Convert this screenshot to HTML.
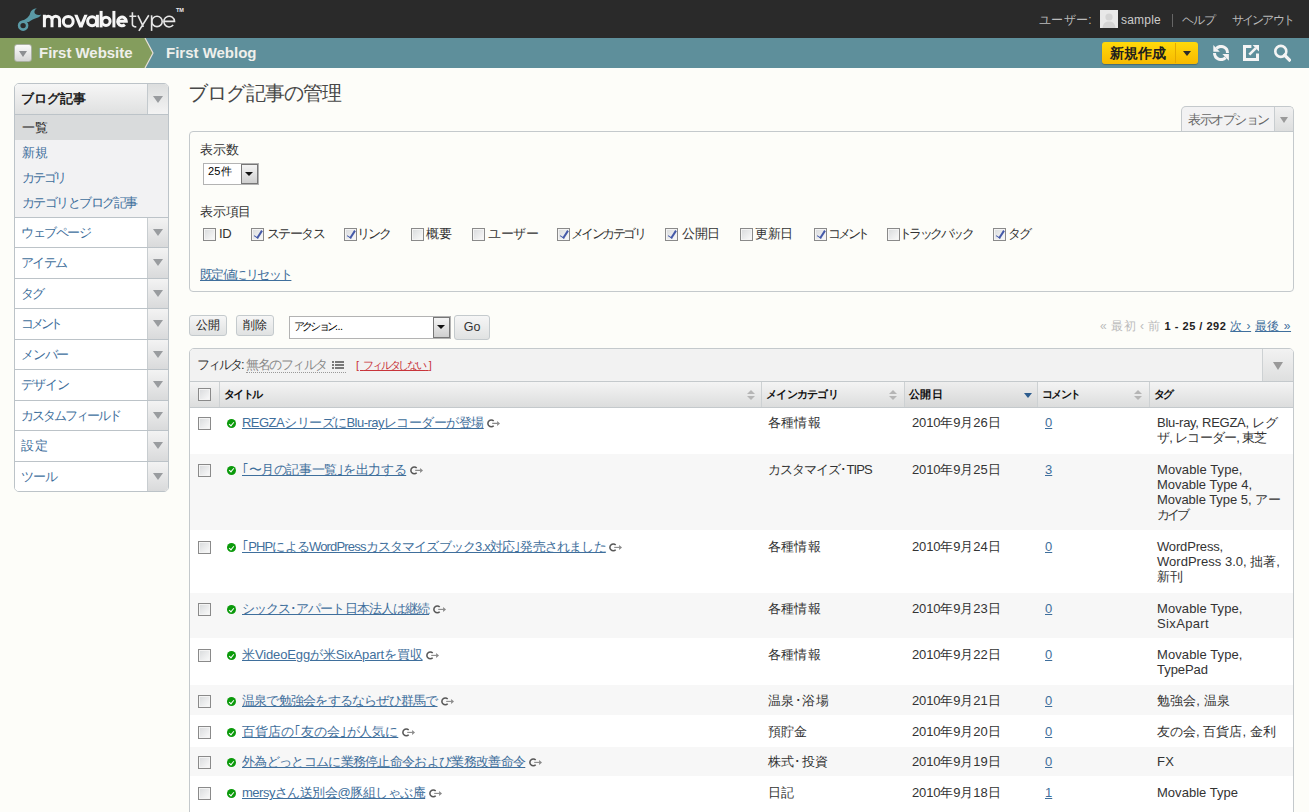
<!DOCTYPE html>
<html><head><meta charset="utf-8"><style>
.lb{margin-left:-6px}.rb{margin-right:-6px}.nd{margin:0 -3px}
*{box-sizing:border-box;margin:0;padding:0}
html,body{width:1309px;height:812px;overflow:hidden}
body{background:#fdfdf9;font-family:"Liberation Sans",sans-serif;font-size:13px;color:#333;position:relative}
a{color:#3f6f9c;text-decoration:underline}
.fit{white-space:nowrap}
.abs{position:absolute}
#hdr{position:absolute;left:0;top:0;width:1309px;height:38px;background:#2a2a2a}
#nav{position:absolute;left:0;top:38px;width:1309px;height:30px;background:#5e8f9b}
#navgreen{position:absolute;left:0;top:0;height:30px;width:153px;background:#849d5d;clip-path:polygon(0 0,145px 0,153px 15px,145px 30px,0 30px)}
.ddbtn{position:absolute;left:14px;top:6px;width:18px;height:18px;border-radius:3px;background:linear-gradient(#fafafa,#d6d6d6);border:1px solid #a9b0a0}
.tri{position:absolute;width:0;height:0;border-left:5px solid transparent;border-right:5px solid transparent;border-top:7px solid #999}
.navtxt{position:absolute;top:6px;font-weight:bold;font-size:15px;color:#efefeb;line-height:17px}
.hl{position:absolute;top:13px;font-size:12px;color:#bbb;line-height:15px}
#side{position:absolute;left:14px;top:83px;width:155px;height:409px;border:1px solid #bcc3c8;border-radius:5px;background:#fff;overflow:hidden}
.sh{position:absolute;left:0;top:0;width:153px;height:31px;background:linear-gradient(#f6f6f6,#dfe0e0);border-bottom:1px solid #bcc3c8}
.shdd{position:absolute;left:132px;top:0;width:21px;height:100%;border-left:1px solid #c3c9cd;background:linear-gradient(#dcdede,#f3f3f3)}
.sub{position:absolute;left:0;top:31px;width:153px;height:103px;background:#f2f2f3;border-bottom:1px solid #bcc3c8}
.si{position:absolute;left:0;width:153px;height:25px;line-height:25px;padding-left:7px;color:#3f6f9c}
.mi{position:absolute;left:0;width:153px;border-bottom:1px solid #bcc3c8;background:#fff}
.mi > span{position:absolute;left:6px;top:7px;color:#3f6f9c;line-height:15px}
.mi .dd{position:absolute;left:132px;top:0;width:21px;bottom:0;border-left:1px solid #c8cdd0;background:linear-gradient(#f3f3f3,#d9dadb)}
.cb{position:absolute;width:13px;height:13px;border:1px solid #8a8a8a;background:linear-gradient(135deg,#d8dadc,#fbfbfb);box-shadow:inset 0 0 0 1px #f4f4f4}
.cbc::after{content:"";position:absolute;left:3.5px;top:0px;width:2.5px;height:7.5px;border-right:2px solid #4459a8;border-bottom:1.8px solid #4459a8;transform:rotate(33deg)}
.lbl{position:absolute;line-height:15px;color:#333}
.btn{position:absolute;height:21px;border:1px solid #c4cacd;border-radius:3px;background:linear-gradient(#f6f6f6,#e0e2e2);font-size:12px;color:#222;line-height:19px}
.sel{position:absolute;border:1px solid #b3b3b3;background:#fff;font-size:11px;color:#000}
.selbtn{position:absolute;right:0px;top:0px;width:17px;bottom:0px;border:1px solid #777;background:linear-gradient(#f4f4f4,#cfcfcf)}
.selbtn::after{content:"";position:absolute;left:3px;top:7px;border-left:4px solid transparent;border-right:4px solid transparent;border-top:4px solid #111}
#opt{position:absolute;left:189px;top:131px;width:1105px;height:161px;border:1px solid #c4c9cc;border-radius:4px 0 4px 4px}
#opttab{position:absolute;left:1181px;top:106px;width:113px;height:26px;border:1px solid #c4c9cc;border-bottom:none;border-radius:5px 5px 0 0;background:#f2f2f3;overflow:hidden}
#list{position:absolute;left:189px;top:348px;width:1105px;height:470px;border:1px solid #c4c9cc;border-radius:5px 5px 0 0;overflow:hidden;background:#fff}
#fbar{position:absolute;left:0;top:0;width:1103px;height:33px;background:#f2f2f2;border-bottom:1px solid #c4c9cc}
#thead{position:absolute;left:0;top:33px;width:1103px;height:26px;background:linear-gradient(#f4f4f4,#dcdddd);border-bottom:1px solid #c4c9cc}
.th{position:absolute;top:0;height:25px;border-left:1px solid #cdd1d3;font-size:11px;font-weight:bold;color:#111;padding:6px 0 0 4px;line-height:13px}
.sort{position:absolute;top:8px;width:8px;height:10px}
.sort::before{content:"";position:absolute;left:0;top:0;border-left:4px solid transparent;border-right:4px solid transparent;border-bottom:4px solid #b5b5b5}
.sort::after{content:"";position:absolute;left:0;top:6px;border-left:4px solid transparent;border-right:4px solid transparent;border-top:4px solid #b5b5b5}
.row{position:absolute;left:0;width:1103px}
.row.alt{background:#f7f7f7}
.td{position:absolute;top:7px;line-height:15.2px;color:#333}
.ok{position:absolute;width:9px;height:9px;border-radius:50%;background:#0b9a0b}
.ok::after{content:"";position:absolute;left:3px;top:1.5px;width:2px;height:4px;border-right:1.5px solid #fff;border-bottom:1.5px solid #fff;transform:rotate(40deg)}
</style></head><body>
<div id="hdr">
<svg class="abs" style="left:12px;top:2px" width="40" height="34" viewBox="12 2 40 34">
<path d="M36.9 8.2 C33.5 8.4 30.8 10.2 30.2 13 C29.6 16.5 26.5 19 20.4 21.7 L28.75 22.1 C31 20 34 18.6 38 17.5 C39.5 16.9 40.5 15.8 41 14.5 C39.5 15.3 37 15.2 35.5 14.1 C34 12.8 33.9 10 36.9 8.2 Z" fill="#5a9aa6"/>
<circle cx="23.1" cy="25.6" r="4" fill="none" stroke="#5a9aa6" stroke-width="2.6"/></svg>
<svg class="abs" style="left:0;top:0" width="200" height="38" viewBox="0 0 200 38">
<g fill="none" stroke="#f6f6f6" stroke-width="3">
<path d="M44.4 14.8 V27.3 M44.4 20.1 A3.8 3.8 0 0 1 52 20.1 V27.3 M52 20.1 A3.8 3.8 0 0 1 59.6 20.1 V27.3"/>
<circle cx="68.25" cy="21.4" r="4.9"/>
<circle cx="92.1" cy="21.3" r="4.5"/>
<path d="M97.4 14.8 V27.3"/>
<path d="M101.1 10.9 V27.4"/>
<circle cx="106" cy="21.3" r="4.1"/>
<path d="M113.9 10.9 V27.4"/>
<path d="M117.6 21.3 H126.3 A4.3 4.3 0 1 0 124.9 24.6" />
</g>
<path d="M74.2 14.8 L77.5 14.8 L80.9 22.8 L84.3 14.8 L87.6 14.8 L82.5 27.4 L79.3 27.4 Z" fill="#f6f6f6"/>
<g fill="none" stroke="#e6e6e6" stroke-width="1.6">
<path d="M132.4 12.3 V24.3 Q132.4 26.9 136.3 26.9 M129.4 16.3 H136.3"/>
<path d="M137.9 15.3 L143.4 26.9 M148.8 15.3 L138.9 30.9"/>
<path d="M151.6 15.3 V30.9"/>
<circle cx="157" cy="21.4" r="5.2"/>
<path d="M163.8 21.4 H174.5 A5.35 5.35 0 1 0 173.2 25.1"/>
</g>
<text x="176" y="12" font-family="Liberation Sans" font-weight="bold" font-size="5.5" fill="#eee">TM</text>
</svg>
<div class="hl" style="left:1039px"><span class="fit" id="f0" style="letter-spacing:0.331px">ユーザー:</span></div>
<svg class="abs" style="left:1100px;top:10px" width="18" height="18" viewBox="0 0 18 18"><rect width="18" height="18" fill="#e8e8e8"/><circle cx="9" cy="7" r="3.6" fill="#d4d4d4"/><path d="M2.5 18 C3 13 5.5 11.5 9 11.5 C12.5 11.5 15 13 15.5 18 Z" fill="#d4d4d4"/></svg>
<div class="hl" style="left:1121px;color:#ccc"><span class="fit" id="f1" style="letter-spacing:0.219px">sample</span></div>
<div class="abs" style="left:1172px;top:14px;width:1px;height:13px;background:#666"></div>
<div class="hl" style="left:1182px"><span class="fit" id="f2" style="letter-spacing:-1.000px">ヘルプ</span></div>
<div class="hl" style="left:1232px"><span class="fit" id="f3" style="letter-spacing:-1.836px">サインアウト</span></div>
</div>
<div id="nav"><div id="navgreen"></div>
<svg class="abs" style="left:0;top:0" width="160" height="30"><polyline points="145,0 153,15 145,30" fill="none" stroke="#e8e0d8" stroke-width="1.2"/></svg>
<div class="ddbtn"><div class="tri" style="left:4px;top:6px;border-left-width:4px;border-right-width:4px;border-top-width:6px;border-top-color:#8d8f92"></div></div>
<div class="navtxt" style="left:39px"><span class="fit" id="f4" style="letter-spacing:-0.032px">First Website</span></div>
<div class="navtxt" style="left:166px"><span class="fit" id="f5" style="letter-spacing:-0.005px">First Weblog</span></div>
<div class="abs" style="left:1102px;top:4px;width:96px;height:22px;border-radius:3px;background:linear-gradient(#ffd90a,#f7b900);box-shadow:0 1px 1px rgba(0,0,0,0.25)"><div class="abs" style="left:73px;top:1px;width:1px;height:20px;background:#e3a900"></div><div class="abs" style="left:81px;top:9px;border-left:4px solid transparent;border-right:4px solid transparent;border-top:5.5px solid #2a2a2a"></div><div class="abs" style="left:8px;top:3px;font-size:14px;font-weight:bold;color:#1e1e1e;line-height:16px">新規作成</div></div>
<svg class="abs" style="left:1213px;top:7px" width="16" height="16" viewBox="0 0 16 16"><g fill="none" stroke="#f4f4f4" stroke-width="3"><path d="M14.5 8 A6.5 6.5 0 0 0 3.4 3.4"/><path d="M1.5 8 A6.5 6.5 0 0 0 12.6 12.6"/></g><g fill="#f4f4f4"><path d="M0.3 0.1 L0.3 6.8 L6.8 6.8 Z"/><path d="M15.9 9.1 L15.9 15.8 L9.4 9.1 Z"/></g></svg>
<svg class="abs" style="left:1243px;top:7px" width="16" height="16" viewBox="0 0 16 16"><path d="M8.4 1.5 H1.5 V14.5 H14.5 V8.6" fill="none" stroke="#f4f4f4" stroke-width="3"/><path d="M6.3 9.7 L12.8 3.2" stroke="#f4f4f4" stroke-width="2.6"/><path d="M9.6 0 L16 0 L16 6.4 Z" fill="#f4f4f4"/></svg>
<svg class="abs" style="left:1273px;top:6px" width="18" height="18" viewBox="0 0 18 18"><circle cx="7.8" cy="7.4" r="5.5" fill="none" stroke="#f4f4f4" stroke-width="2.6"/><path d="M11.6 11.2 L16.4 16" stroke="#f4f4f4" stroke-width="3.2" stroke-linecap="square"/></svg>

</div>
<div id="side">
<div class="sh"><div class="abs" style="left:6px;top:7px;font-weight:bold;color:#222;line-height:15px"><span class="fit" id="f6" style="letter-spacing:0.100px">ブログ記事</span></div><div class="shdd"><div class="tri" style="left:5px;top:12px;border-top-width:7.5px;border-top-color:#999c9f"></div></div></div>
<div class="sub">
<div class="si" style="top:0;background:#d9dbdc;color:#222"><span class="fit" id="f7" style="letter-spacing:0.000px">一覧</span></div>
<div class="si" style="top:25px"><span class="fit" id="f8" style="letter-spacing:0.000px">新規</span></div>
<div class="si" style="top:50px"><span class="fit" id="f9" style="letter-spacing:-2.250px">カテゴリ</span></div>
<div class="si" style="top:75px"><span class="fit" id="f10" style="letter-spacing:-1.552px">カテゴリとブログ記事</span></div>
</div>
<div class="mi" style="top:134px;height:30px"><span class="fit" id="f11" style="letter-spacing:-1.500px">ウェブページ</span><div class="dd"><div class="tri" style="left:5px;top:11px;border-top-width:7.5px;border-top-color:#999c9f"></div></div></div>
<div class="mi" style="top:164px;height:31px"><span class="fit" id="f12" style="letter-spacing:-1.578px">アイテム</span><div class="dd"><div class="tri" style="left:5px;top:11px;border-top-width:7.5px;border-top-color:#999c9f"></div></div></div>
<div class="mi" style="top:195px;height:30px"><span class="fit" id="f13" style="letter-spacing:-2.500px">タグ</span><div class="dd"><div class="tri" style="left:5px;top:11px;border-top-width:7.5px;border-top-color:#999c9f"></div></div></div>
<div class="mi" style="top:225px;height:31px"><span class="fit" id="f14" style="letter-spacing:-3.250px">コメント</span><div class="dd"><div class="tri" style="left:5px;top:11px;border-top-width:7.5px;border-top-color:#999c9f"></div></div></div>
<div class="mi" style="top:256px;height:30px"><span class="fit" id="f15" style="letter-spacing:-1.250px">メンバー</span><div class="dd"><div class="tri" style="left:5px;top:11px;border-top-width:7.5px;border-top-color:#999c9f"></div></div></div>
<div class="mi" style="top:286px;height:31px"><span class="fit" id="f16" style="letter-spacing:-1.000px">デザイン</span><div class="dd"><div class="tri" style="left:5px;top:11px;border-top-width:7.5px;border-top-color:#999c9f"></div></div></div>
<div class="mi" style="top:317px;height:30px"><span class="fit" id="f17" style="letter-spacing:-2.035px">カスタムフィールド</span><div class="dd"><div class="tri" style="left:5px;top:11px;border-top-width:7.5px;border-top-color:#999c9f"></div></div></div>
<div class="mi" style="top:347px;height:31px"><span class="fit" id="f18" style="letter-spacing:0.500px">設定</span><div class="dd"><div class="tri" style="left:5px;top:11px;border-top-width:7.5px;border-top-color:#999c9f"></div></div></div>
<div class="mi" style="top:378px;height:30px"><span class="fit" id="f19" style="letter-spacing:-1.000px">ツール</span><div class="dd"><div class="tri" style="left:5px;top:11px;border-top-width:7.5px;border-top-color:#999c9f"></div></div></div>
</div>
<div class="abs" style="left:188px;top:81px;font-size:20px;color:#484848;line-height:24px"><span class="fit" id="f20" style="letter-spacing:-0.814px">ブログ記事の管理</span></div>
<div id="opttab"><div class="abs" style="left:6px;top:5px;font-size:13px;color:#666;line-height:15px"><span class="fit" id="f21" style="letter-spacing:-1.487px">表示オプション</span></div><div class="abs" style="left:92px;top:0;width:19px;height:25px;border-left:1px solid #c8cdd0;background:linear-gradient(#f0f0f0,#dcdddd)"><div class="tri" style="left:5px;top:10px;border-left-width:4px;border-right-width:4px;border-top-width:6px;border-top-color:#9a9a9a"></div></div></div>
<div id="opt">
<div class="lbl" style="left:10px;top:10px"><span class="fit" id="f22" style="letter-spacing:-0.068px">表示数</span></div>
<div class="sel" style="left:13px;top:31px;width:56px;height:22px"><div class="abs" style="left:4px;top:1px;line-height:13px"><span class="fit" id="f23" style="letter-spacing:0.250px">25件</span></div><div class="selbtn"></div></div>
<div class="lbl" style="left:10px;top:72px"><span class="fit" id="f24" style="letter-spacing:-0.250px">表示項目</span></div>
</div>
<div class="cb" style="left:203px;top:228px"></div><div class="lbl" style="left:219px;top:226px"><span class="fit" id="f25" style="letter-spacing:-0.250px">ID</span></div>
<div class="cb cbc" style="left:251px;top:228px"></div><div class="lbl" style="left:267px;top:226px"><span class="fit" id="f26" style="letter-spacing:-1.603px">ステータス</span></div>
<div class="cb cbc" style="left:344px;top:228px"></div><div class="lbl" style="left:357px;top:226px"><span class="fit" id="f27" style="letter-spacing:-1.802px">リンク</span></div>
<div class="cb" style="left:411px;top:228px"></div><div class="lbl" style="left:426px;top:226px"><span class="fit" id="f28" style="letter-spacing:0.344px">概要</span></div>
<div class="cb" style="left:472px;top:228px"></div><div class="lbl" style="left:488px;top:226px"><span class="fit" id="f29" style="letter-spacing:-0.500px">ユーザー</span></div>
<div class="cb cbc" style="left:557px;top:228px"></div><div class="lbl" style="left:571px;top:226px"><span class="fit" id="f30" style="letter-spacing:-2.574px">メインカテゴリ</span></div>
<div class="cb cbc" style="left:665px;top:228px"></div><div class="lbl" style="left:682px;top:226px"><span class="fit" id="f31" style="letter-spacing:-0.401px">公開日</span></div>
<div class="cb" style="left:740px;top:228px"></div><div class="lbl" style="left:755px;top:226px"><span class="fit" id="f32" style="letter-spacing:-0.469px">更新日</span></div>
<div class="cb cbc" style="left:814px;top:228px"></div><div class="lbl" style="left:828px;top:226px"><span class="fit" id="f33" style="letter-spacing:-3.250px">コメント</span></div>
<div class="cb" style="left:887px;top:228px"></div><div class="lbl" style="left:899px;top:226px"><span class="fit" id="f34" style="letter-spacing:-2.574px">トラックバック</span></div>
<div class="cb cbc" style="left:993px;top:228px"></div><div class="lbl" style="left:1008px;top:226px"><span class="fit" id="f35" style="letter-spacing:-2.000px">タグ</span></div>
<a class="lbl" href="#" style="left:200px;top:267px;color:#3f6f9c"><span class="fit" id="f36" style="letter-spacing:-1.576px">既定値にリセット</span></a>
<div class="btn" style="left:189px;top:315px;width:38px"><span class="abs" style="left:6px;top:2px;line-height:15px"><span class="fit" id="f37" style="letter-spacing:0.000px">公開</span></span></div>
<div class="btn" style="left:236px;top:315px;width:38px"><span class="abs" style="left:6px;top:2px;line-height:15px"><span class="fit" id="f38" style="letter-spacing:0.250px">削除</span></span></div>
<div class="sel" style="left:289px;top:316px;width:162px;height:23px"><div class="abs" style="left:4px;top:3px;line-height:13px"><span class="fit" id="f39" style="letter-spacing:-2.803px">アクション</span><span style="letter-spacing:-0.5px">...</span></div><div class="selbtn"></div></div>
<div class="btn" style="left:454px;top:315px;width:36px;height:25px;line-height:23px;font-size:12.5px;text-align:center;color:#333">Go</div>
<div class="abs" style="left:1100px;top:319px;font-size:12px;line-height:15px;color:#bbb;white-space:nowrap"><span class="fit" id="f40" style="letter-spacing:0.510px">« 最初 ‹ 前 <b style="color:#222;font-size:11px">1 - 25 / 292</b> <a href="#">次 ›</a> <a href="#">最後 »</a></span></div>
<div id="list"><div id="fbar">
<div class="abs" style="left:7px;top:8px;line-height:15px;color:#333;white-space:nowrap"><span class="fit" id="f41" style="letter-spacing:-2.025px">フィルタ:</span> <span style="color:#888;border-bottom:1px dotted #999;padding-right:19px"><span class="fit" id="f42" style="letter-spacing:-1.516px">無名のフィルタ</span></span></div>
<svg class="abs" style="left:142px;top:11px" width="12" height="10"><g fill="#7a7a7a"><rect x="0" y="1" width="2" height="2"/><rect x="3" y="1" width="9" height="2"/><rect x="0" y="4" width="2" height="2"/><rect x="3" y="4" width="9" height="2"/><rect x="0" y="7" width="2" height="2"/><rect x="3" y="7" width="9" height="2"/></g></svg>
<a class="abs" href="#" style="left:166px;top:10px;font-size:11px;line-height:13px;color:#c8343a;white-space:nowrap"><span style="letter-spacing:4px">[</span><span class="fit" id="f43" style="letter-spacing:-2.143px">フィルタしない</span><span style="letter-spacing:0.5px">&nbsp;</span>]</a>
<div class="abs" style="left:1072px;top:0;width:31px;height:32px;border-left:1px solid #cdd1d3;background:linear-gradient(#f2f2f2,#dedfdf)"><div class="tri" style="left:10px;top:13px;border-left-width:5px;border-right-width:5px;border-top-width:8px;border-top-color:#999"></div></div>
</div><div id="thead"><div class="cb" style="left:8px;top:6px"></div>
<div class="th" style="left:29px;width:542px"><span class="fit" id="f44" style="letter-spacing:-1.551px">タイトル</span><div class="sort" style="left:527px"></div></div>
<div class="th" style="left:571px;width:143px"><span class="fit" id="f45" style="letter-spacing:-0.717px">メインカテゴリ</span><div class="sort" style="left:127px"></div></div>
<div class="th" style="left:714px;width:133px;background:linear-gradient(#eeeeee,#d6d7d7)"><span class="fit" id="f46" style="letter-spacing:0.333px">公開日</span><div class="abs" style="left:119px;top:11px;border-left:4px solid transparent;border-right:4px solid transparent;border-top:5px solid #2c5c8e"></div></div>
<div class="th" style="left:847px;width:112px"><span class="fit" id="f47" style="letter-spacing:-1.750px">コメント</span><div class="sort" style="left:96px"></div></div>
<div class="th" style="left:959px;width:144px"><span class="fit" id="f48" style="letter-spacing:-2.000px">タグ</span></div>
</div>
<div class="row" style="top:59px;height:46px">
<div class="abs" style="left:0;top:0px;width:100%;height:100%">
<div class="cb" style="left:8px;top:9px"></div><div class="ok" style="left:37px;top:11px"></div>
<div class="td" style="left:52px;white-space:nowrap"><a href="#"><span class="fit" id="f51" style="letter-spacing:-0.530px">REGZAシリーズにBlu-rayレコーダーが登場</span></a><svg style="margin-left:3.5px;vertical-align:-1px" width="14" height="10" viewBox="0 0 14 10"><path d="M6.7 3.0 A3.4 3.4 0 1 0 6.7 7.8" fill="none" stroke="#585858" stroke-width="1.55"/><path d="M5.2 5.4 H10.6" stroke="#8a8a8a" stroke-width="1.1"/><path d="M10.1 2.9 L13 5.4 L10.1 7.9 Z" fill="#8a8a8a"/></svg></div>
<div class="td" style="left:578px"><span class="fit" id="f52" style="letter-spacing:0.172px">各種情報</span></div>
<div class="td" style="left:722px"><span class="fit" id="f53" style="letter-spacing:-0.122px">2010年9月26日</span></div>
<div class="td" style="left:855px"><a href="#">0</a></div>
<div class="td" style="left:967px"><span class="fit" id="f49" style="letter-spacing:-0.264px">Blu-ray, REGZA, レグ</span><br><span class="fit" id="f50" style="letter-spacing:-0.737px">ザ, レコーダー, 東芝</span></div>
</div></div>
<div class="row alt" style="top:105px;height:76px">
<div class="abs" style="left:0;top:0.5px;width:100%;height:100%">
<div class="cb" style="left:8px;top:9px"></div><div class="ok" style="left:37px;top:11px"></div>
<div class="td" style="left:52px;white-space:nowrap"><a href="#"><span class="fit" id="f58" style="letter-spacing:-0.415px">｢〜月の記事一覧｣を出力する</span></a><svg style="margin-left:3.5px;vertical-align:-1px" width="14" height="10" viewBox="0 0 14 10"><path d="M6.7 3.0 A3.4 3.4 0 1 0 6.7 7.8" fill="none" stroke="#585858" stroke-width="1.55"/><path d="M5.2 5.4 H10.6" stroke="#8a8a8a" stroke-width="1.1"/><path d="M10.1 2.9 L13 5.4 L10.1 7.9 Z" fill="#8a8a8a"/></svg></div>
<div class="td" style="left:578px"><span class="fit" id="f59" style="letter-spacing:-0.928px">カスタマイズ･TIPS</span></div>
<div class="td" style="left:722px"><span class="fit" id="f60" style="letter-spacing:-0.122px">2010年9月25日</span></div>
<div class="td" style="left:855px"><a href="#">3</a></div>
<div class="td" style="left:967px"><span class="fit" id="f54" style="letter-spacing:0.091px">Movable Type,</span><br><span class="fit" id="f55" style="letter-spacing:-0.011px">Movable Type 4,</span><br><span class="fit" id="f56" style="letter-spacing:-0.043px">Movable Type 5, アー</span><br><span class="fit" id="f57" style="letter-spacing:-3.000px">カイブ</span></div>
</div></div>
<div class="row" style="top:181px;height:63px">
<div class="abs" style="left:0;top:2px;width:100%;height:100%">
<div class="cb" style="left:8px;top:9px"></div><div class="ok" style="left:37px;top:11px"></div>
<div class="td" style="left:52px;white-space:nowrap"><a href="#"><span class="fit" id="f64" style="letter-spacing:-0.827px">｢PHPによるWordPressカスタマイズブック3.x対応｣発売されました</span></a><svg style="margin-left:3.5px;vertical-align:-1px" width="14" height="10" viewBox="0 0 14 10"><path d="M6.7 3.0 A3.4 3.4 0 1 0 6.7 7.8" fill="none" stroke="#585858" stroke-width="1.55"/><path d="M5.2 5.4 H10.6" stroke="#8a8a8a" stroke-width="1.1"/><path d="M10.1 2.9 L13 5.4 L10.1 7.9 Z" fill="#8a8a8a"/></svg></div>
<div class="td" style="left:578px"><span class="fit" id="f65" style="letter-spacing:0.172px">各種情報</span></div>
<div class="td" style="left:722px"><span class="fit" id="f66" style="letter-spacing:-0.122px">2010年9月24日</span></div>
<div class="td" style="left:855px"><a href="#">0</a></div>
<div class="td" style="left:967px"><span class="fit" id="f61" style="letter-spacing:-0.167px">WordPress,</span><br><span class="fit" id="f62" style="letter-spacing:0.023px">WordPress 3.0, 拙著,</span><br><span class="fit" id="f63" style="letter-spacing:0.000px">新刊</span></div>
</div></div>
<div class="row alt" style="top:244px;height:45px">
<div class="abs" style="left:0;top:1px;width:100%;height:100%">
<div class="cb" style="left:8px;top:9px"></div><div class="ok" style="left:37px;top:11px"></div>
<div class="td" style="left:52px;white-space:nowrap"><a href="#"><span class="fit" id="f69" style="letter-spacing:-0.938px">シックス･アパート日本法人は継続</span></a><svg style="margin-left:3.5px;vertical-align:-1px" width="14" height="10" viewBox="0 0 14 10"><path d="M6.7 3.0 A3.4 3.4 0 1 0 6.7 7.8" fill="none" stroke="#585858" stroke-width="1.55"/><path d="M5.2 5.4 H10.6" stroke="#8a8a8a" stroke-width="1.1"/><path d="M10.1 2.9 L13 5.4 L10.1 7.9 Z" fill="#8a8a8a"/></svg></div>
<div class="td" style="left:578px"><span class="fit" id="f70" style="letter-spacing:0.172px">各種情報</span></div>
<div class="td" style="left:722px"><span class="fit" id="f71" style="letter-spacing:-0.122px">2010年9月23日</span></div>
<div class="td" style="left:855px"><a href="#">0</a></div>
<div class="td" style="left:967px"><span class="fit" id="f67" style="letter-spacing:0.091px">Movable Type,</span><br><span class="fit" id="f68" style="letter-spacing:0.357px">SixApart</span></div>
</div></div>
<div class="row" style="top:289px;height:47px">
<div class="abs" style="left:0;top:2px;width:100%;height:100%">
<div class="cb" style="left:8px;top:9px"></div><div class="ok" style="left:37px;top:11px"></div>
<div class="td" style="left:52px;white-space:nowrap"><a href="#"><span class="fit" id="f74" style="letter-spacing:-0.122px">米VideoEggが米SixApartを買収</span></a><svg style="margin-left:3.5px;vertical-align:-1px" width="14" height="10" viewBox="0 0 14 10"><path d="M6.7 3.0 A3.4 3.4 0 1 0 6.7 7.8" fill="none" stroke="#585858" stroke-width="1.55"/><path d="M5.2 5.4 H10.6" stroke="#8a8a8a" stroke-width="1.1"/><path d="M10.1 2.9 L13 5.4 L10.1 7.9 Z" fill="#8a8a8a"/></svg></div>
<div class="td" style="left:578px"><span class="fit" id="f75" style="letter-spacing:0.172px">各種情報</span></div>
<div class="td" style="left:722px"><span class="fit" id="f76" style="letter-spacing:-0.122px">2010年9月22日</span></div>
<div class="td" style="left:855px"><a href="#">0</a></div>
<div class="td" style="left:967px"><span class="fit" id="f72" style="letter-spacing:0.091px">Movable Type,</span><br><span class="fit" id="f73" style="letter-spacing:-0.047px">TypePad</span></div>
</div></div>
<div class="row alt" style="top:336px;height:30px">
<div class="abs" style="left:0;top:1px;width:100%;height:100%">
<div class="cb" style="left:8px;top:9px"></div><div class="ok" style="left:37px;top:11px"></div>
<div class="td" style="left:52px;white-space:nowrap"><a href="#"><span class="fit" id="f78" style="letter-spacing:-0.782px">温泉で勉強会をするならぜひ群馬で</span></a><svg style="margin-left:3.5px;vertical-align:-1px" width="14" height="10" viewBox="0 0 14 10"><path d="M6.7 3.0 A3.4 3.4 0 1 0 6.7 7.8" fill="none" stroke="#585858" stroke-width="1.55"/><path d="M5.2 5.4 H10.6" stroke="#8a8a8a" stroke-width="1.1"/><path d="M10.1 2.9 L13 5.4 L10.1 7.9 Z" fill="#8a8a8a"/></svg></div>
<div class="td" style="left:578px"><span class="fit" id="f79" style="letter-spacing:0.397px">温泉･浴場</span></div>
<div class="td" style="left:722px"><span class="fit" id="f80" style="letter-spacing:-0.122px">2010年9月21日</span></div>
<div class="td" style="left:855px"><a href="#">0</a></div>
<div class="td" style="left:967px"><span class="fit" id="f77" style="letter-spacing:0.067px">勉強会, 温泉</span></div>
</div></div>
<div class="row" style="top:366px;height:32px">
<div class="abs" style="left:0;top:2px;width:100%;height:100%">
<div class="cb" style="left:8px;top:9px"></div><div class="ok" style="left:37px;top:11px"></div>
<div class="td" style="left:52px;white-space:nowrap"><a href="#"><span class="fit" id="f82" style="letter-spacing:-0.055px">百貨店の｢友の会｣が人気に</span></a><svg style="margin-left:3.5px;vertical-align:-1px" width="14" height="10" viewBox="0 0 14 10"><path d="M6.7 3.0 A3.4 3.4 0 1 0 6.7 7.8" fill="none" stroke="#585858" stroke-width="1.55"/><path d="M5.2 5.4 H10.6" stroke="#8a8a8a" stroke-width="1.1"/><path d="M10.1 2.9 L13 5.4 L10.1 7.9 Z" fill="#8a8a8a"/></svg></div>
<div class="td" style="left:578px"><span class="fit" id="f83" style="letter-spacing:0.161px">預貯金</span></div>
<div class="td" style="left:722px"><span class="fit" id="f84" style="letter-spacing:-0.122px">2010年9月20日</span></div>
<div class="td" style="left:855px"><a href="#">0</a></div>
<div class="td" style="left:967px"><span class="fit" id="f81" style="letter-spacing:0.029px">友の会, 百貨店, 金利</span></div>
</div></div>
<div class="row alt" style="top:398px;height:29px">
<div class="abs" style="left:0;top:0px;width:100%;height:100%">
<div class="cb" style="left:8px;top:9px"></div><div class="ok" style="left:37px;top:11px"></div>
<div class="td" style="left:52px;white-space:nowrap"><a href="#"><span class="fit" id="f86" style="letter-spacing:-0.683px">外為どっとコムに業務停止命令および業務改善命令</span></a><svg style="margin-left:3.5px;vertical-align:-1px" width="14" height="10" viewBox="0 0 14 10"><path d="M6.7 3.0 A3.4 3.4 0 1 0 6.7 7.8" fill="none" stroke="#585858" stroke-width="1.55"/><path d="M5.2 5.4 H10.6" stroke="#8a8a8a" stroke-width="1.1"/><path d="M10.1 2.9 L13 5.4 L10.1 7.9 Z" fill="#8a8a8a"/></svg></div>
<div class="td" style="left:578px"><span class="fit" id="f87" style="letter-spacing:0.197px">株式･投資</span></div>
<div class="td" style="left:722px"><span class="fit" id="f88" style="letter-spacing:-0.122px">2010年9月19日</span></div>
<div class="td" style="left:855px"><a href="#">0</a></div>
<div class="td" style="left:967px"><span class="fit" id="f85" style="letter-spacing:0.188px">FX</span></div>
</div></div>
<div class="row" style="top:427px;height:32px">
<div class="abs" style="left:0;top:2px;width:100%;height:100%">
<div class="cb" style="left:8px;top:9px"></div><div class="ok" style="left:37px;top:11px"></div>
<div class="td" style="left:52px;white-space:nowrap"><a href="#"><span class="fit" id="f90" style="letter-spacing:-0.494px">mersyさん送別会@豚組しゃぶ庵</span></a><svg style="margin-left:3.5px;vertical-align:-1px" width="14" height="10" viewBox="0 0 14 10"><path d="M6.7 3.0 A3.4 3.4 0 1 0 6.7 7.8" fill="none" stroke="#585858" stroke-width="1.55"/><path d="M5.2 5.4 H10.6" stroke="#8a8a8a" stroke-width="1.1"/><path d="M10.1 2.9 L13 5.4 L10.1 7.9 Z" fill="#8a8a8a"/></svg></div>
<div class="td" style="left:578px"><span class="fit" id="f91" style="letter-spacing:0.344px">日記</span></div>
<div class="td" style="left:722px"><span class="fit" id="f92" style="letter-spacing:-0.122px">2010年9月18日</span></div>
<div class="td" style="left:855px"><a href="#">1</a></div>
<div class="td" style="left:967px"><span class="fit" id="f89" style="letter-spacing:0.025px">Movable Type</span></div>
</div></div>
</div>
</body></html>
